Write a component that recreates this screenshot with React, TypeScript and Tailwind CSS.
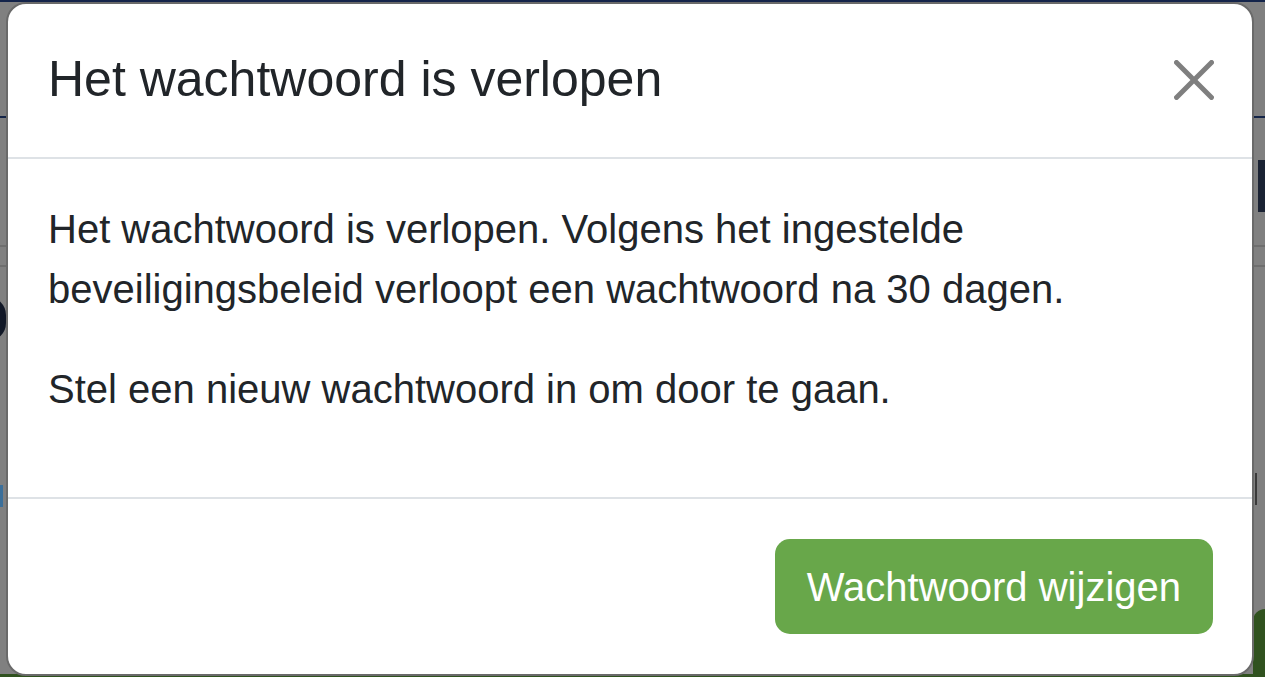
import React from "react";

function CloseIcon() {
  return (
    <svg viewBox="0 0 16 16" width={40} height={40} aria-hidden="true">
      <path
        fill="#000"
        fillOpacity={0.5}
        d="M.293.293a1 1 0 0 1 1.414 0L8 6.586 14.293.293a1 1 0 1 1 1.414 1.414L9.414 8l6.293 6.293a1 1 0 0 1-1.414 1.414L8 9.414l-6.293 6.293a1 1 0 0 1-1.414-1.414L6.586 8 .293 1.707a1 1 0 0 1 0-1.414z"
      />
    </svg>
  );
}

// The page underneath, dimmed by the modal backdrop.
function DimmedPage() {
  return (
    <div className="col-start-1 row-start-1 flex flex-col h-[677px] bg-[#808080]">
      <div className="h-[2px] bg-[#14244a]" />
      <div className="h-[114px]" />
      <div className="h-[2px] bg-[#142448]" />
      <div className="h-[42px]" />
      <div className="h-[52px] flex justify-end">
        <div className="w-[7px] bg-[#1a2233]" />
      </div>
      <div className="h-[33px]" />
      <div className="h-[2px] bg-[#6e6e6e]" />
      <div className="h-[18px]" />
      <div className="h-[2px] bg-[#6e6e6e]" />
      <div className="h-[30px]" />
      <div className="h-[44px] flex">
        <div className="ml-[-30px] w-[36px] h-[44px] rounded-full border-[7px] border-[#111827]" />
      </div>
      <div className="h-[132px]" />
      <div className="h-[34px] flex justify-between items-start">
        <div className="mt-[12px] w-[3px] h-[22px] bg-[#3b6f9a]" />
        <div className="mr-[8px] w-[2px] h-[32px] bg-[#3a3a3a]" />
      </div>
      <div className="flex-1 flex justify-end items-end">
        <div className="w-[12px] h-[65px] bg-[#30521f] rounded-tl-[14px]" />
      </div>
      <div className="h-[3px] bg-[#30521f]" />
    </div>
  );
}

export default function App() {
  return (
    <div
      className="grid w-[1265px] h-[677px] overflow-hidden"
      style={{ fontFamily: '"Liberation Sans", Arial, sans-serif' }}
    >
      <DimmedPage />

      {/* dialog */}
      <div className="col-start-1 row-start-1 z-10 ml-[6px] mt-[2px] w-[1248px] h-[674px] flex flex-col bg-white border-2 border-[#6a6a6a] rounded-[20px] text-[#212529] overflow-hidden">
        <div className="flex items-center justify-between pl-[40px] pr-[38px] pt-[38px] pb-[40px] border-b-[2px] border-[#dee2e6]">
          <h5 className="text-[50px] leading-[75px] font-normal m-0">Het wachtwoord is verlopen</h5>
          <button type="button" className="flex items-center justify-center w-[40px] h-[40px] p-0 bg-transparent border-0">
            <CloseIcon />
          </button>
        </div>

        <div className="px-[40px] pt-[40px] pb-[40px] text-[40px] leading-[60px]">
          <p className="mb-[40px]">
            Het wachtwoord is verlopen. Volgens het ingestelde beveiligingsbeleid verloopt een wachtwoord na 30 dagen.
          </p>
          <p>Stel een nieuw wachtwoord in om door te gaan.</p>
        </div>

        <div className="flex justify-end items-center border-t-[2px] border-[#dee2e6] pl-[30px] pr-[29px] py-[30px] mt-auto">
          <button
            type="button"
            className="m-[10px] h-[95px] px-[32px] rounded-[15px] bg-[#68a74a] text-white text-[40px] leading-[60px]"
          >
            Wachtwoord wijzigen
          </button>
        </div>
      </div>
    </div>
  );
}
